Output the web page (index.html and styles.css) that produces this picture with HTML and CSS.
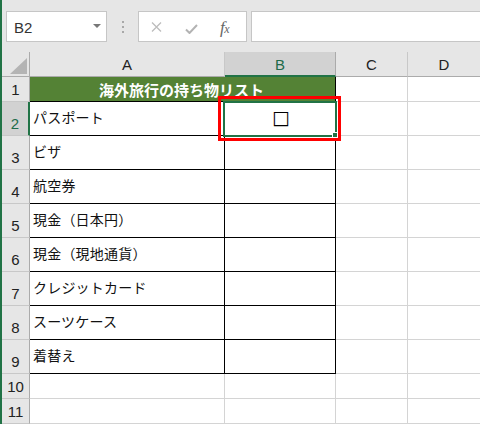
FILE: index.html
```html
<!DOCTYPE html>
<html lang="ja">
<head>
<meta charset="utf-8">
<link rel="stylesheet" href="styles.css">
</head>
<body>
<div class="app">
  <div class="fbar">
    <div class="namebox"><span class="nb-text">B2</span><span class="nb-arrow"></span></div>
    <div class="dots"><i></i><i></i><i></i></div>
    <div class="fbtns">
      <svg class="ic-x" width="11" height="10" viewBox="0 0 11 10"><path d="M1 0.5 L10 9.5 M10 0.5 L1 9.5" stroke="#bdbdbd" stroke-width="1.3" fill="none"/></svg>
      <svg class="ic-ok" width="13" height="10" viewBox="0 0 13 10"><path d="M1 5.5 L4.5 9 L12 1" stroke="#b3b3b3" stroke-width="2" fill="none"/></svg>
      <span class="fx">f<span class="fx-x">x</span></span>
    </div>
    <div class="formula"></div>
  </div>
  <div class="sheet">
    <div class="grid">
      <div class="corner"><span class="tri"></span></div>
      <div class="ch">A</div>
      <div class="ch ch-sel">B</div>
      <div class="ch">C</div>
      <div class="ch">D</div>

      <div class="rh">1</div>
      <div class="title">海外旅行の持ち物リスト</div>
      <div class="c"></div>
      <div class="c"></div>

      <div class="rh rh-sel">2</div>
      <div class="c b txt">パスポート</div>
      <div class="c b chk">□</div>
      <div class="c"></div>
      <div class="c"></div>

      <div class="rh">3</div>
      <div class="c b txt">ビザ</div>
      <div class="c b"></div>
      <div class="c"></div>
      <div class="c"></div>

      <div class="rh">4</div>
      <div class="c b txt">航空券</div>
      <div class="c b"></div>
      <div class="c"></div>
      <div class="c"></div>

      <div class="rh">5</div>
      <div class="c b txt">現金（日本円）</div>
      <div class="c b"></div>
      <div class="c"></div>
      <div class="c"></div>

      <div class="rh">6</div>
      <div class="c b txt">現金（現地通貨）</div>
      <div class="c b"></div>
      <div class="c"></div>
      <div class="c"></div>

      <div class="rh">7</div>
      <div class="c b txt">クレジットカード</div>
      <div class="c b"></div>
      <div class="c"></div>
      <div class="c"></div>

      <div class="rh">8</div>
      <div class="c b txt">スーツケース</div>
      <div class="c b"></div>
      <div class="c"></div>
      <div class="c"></div>

      <div class="rh">9</div>
      <div class="c b txt">着替え</div>
      <div class="c b"></div>
      <div class="c"></div>
      <div class="c"></div>

      <div class="rh">10</div>
      <div class="c"></div>
      <div class="c"></div>
      <div class="c"></div>
      <div class="c"></div>

      <div class="rh">11</div>
      <div class="c"></div>
      <div class="c"></div>
      <div class="c"></div>
      <div class="c"></div>
    </div>
    <div class="sel"><span class="handle"></span></div>
    <div class="annot"></div>
  </div>
</div>
</body>
</html>
```

FILE: styles.css
```css
* { box-sizing: border-box; }
html, body { margin: 0; padding: 0; }
body {
  width: 480px;
  height: 424px;
  overflow: hidden;
  background: #ffffff;
  font-family: "Liberation Sans", Arial, sans-serif;
}
.app {
  width: 480px;
  height: 424px;
  border-left: 2px solid #217346;
  background: #e6e6e6;
  overflow: hidden;
}
.fbar {
  height: 52px;
  display: flex;
  align-items: flex-start;
  padding-top: 11px;
  padding-left: 4px;
  background: #e6e6e6;
}
.namebox {
  width: 101px;
  height: 31px;
  background: #fff;
  border: 1px solid #c6c6c6;
  display: flex;
  align-items: center;
  justify-content: space-between;
  padding: 0 5px 0 7px;
}
.nb-text {
  font-size: 15px;
  color: #333;
  line-height: 1;
  padding-top: 1px;
}
.nb-arrow {
  width: 0;
  height: 0;
  border-left: 4px solid transparent;
  border-right: 4px solid transparent;
  border-top: 4px solid #777;
  margin-top: -1px;
}
.dots {
  width: 31px;
  height: 31px;
  display: flex;
  flex-direction: column;
  align-items: center;
  justify-content: center;
  gap: 3px;
}
.dots i {
  display: block;
  width: 2px;
  height: 2px;
  background: #a8a8a8;
}
.fbtns {
  width: 109px;
  height: 31px;
  background: #fff;
  border: 1px solid #c6c6c6;
  display: flex;
  align-items: center;
  padding-left: 12px;
}
.ic-x { margin-top: 1px; }
.ic-ok { margin-left: 23px; margin-top: 4px; }
.fx {
  margin-left: 22px;
  font-family: "Liberation Serif", "Times New Roman", serif;
  font-style: italic;
  font-size: 17px;
  color: #666;
  line-height: 1;
  letter-spacing: -0.5px;
  margin-top: 1px;
}
.fx-x { font-size: 12px; }
.formula {
  margin-left: 4px;
  flex: 1;
  height: 31px;
  background: #fff;
  border: 1px solid #c6c6c6;
  margin-right: -4px;
}
.sheet {
  position: relative;
}
.grid {
  display: grid;
  grid-template-columns: 28px 195px 111px 72px 73px;
  grid-template-rows: 25px 25px repeat(8, 34px) 25px 25px;
  background: #fff;
}
.corner {
  background: #e6e6e6;
  border-right: 1px solid #ababab;
  border-bottom: 1px solid #ababab;
  display: flex;
  align-items: flex-end;
  justify-content: flex-end;
  padding: 0 2px 2px 0;
}
.tri {
  width: 17px;
  height: 16px;
  background: #b4b4b4;
  clip-path: polygon(100% 0, 100% 100%, 0 100%);
}
.ch {
  background: #e6e6e6;
  border-right: 1px solid #c8c8c8;
  border-bottom: 1px solid #ababab;
  display: flex;
  align-items: center;
  justify-content: center;
  font-size: 15px;
  color: #222;
  line-height: 1;
  padding-top: 1px;
}
.ch-sel {
  background: #d2d2d2;
  color: #1d6b4a;
  border-bottom: 2px solid #217346;
  border-right-color: #ababab;
  padding-top: 2px;
}
.rh {
  background: #e6e6e6;
  border-right: 1px solid #ababab;
  border-bottom: 1px solid #c8c8c8;
  display: flex;
  align-items: flex-end;
  justify-content: center;
  font-size: 15px;
  line-height: 1;
  color: #222;
  padding-bottom: 4px;
}
.rh-sel {
  background: #d2d2d2;
  color: #1d6b4a;
  border-right: 2px solid #217346;
}
.c {
  border-right: 1px solid #d4d4d4;
  border-bottom: 1px solid #d4d4d4;
  font-family: "Noto Sans CJK JP", "Liberation Sans", sans-serif;
  font-size: 14px;
  color: #111;
}
.c.b {
  border-right-color: #000;
  border-bottom-color: #000;
}
.title {
  grid-column: span 2;
  background: #548235;
  border-right: 1px solid #000;
  border-bottom: 1px solid #000;
  display: flex;
  align-items: center;
  justify-content: center;
  font-family: "Noto Sans CJK JP", "Liberation Sans", sans-serif;
  font-weight: bold;
  font-size: 15px;
  color: #fff;
  line-height: 1;
  padding-right: 2px;
}
.txt {
  display: flex;
  align-items: center;
  padding-left: 3px;
  padding-bottom: 3px;
  line-height: 1;
  letter-spacing: 0.2px;
}
.chk {
  display: flex;
  align-items: center;
  justify-content: center;
  line-height: 1;
  font-family: "DejaVu Sans", "Noto Sans CJK JP", sans-serif;
  font-size: 19px;
  color: #000;
  padding-bottom: 3px;
  padding-left: 2px;
}
.sel {
  position: absolute;
  left: 221px;
  top: 49px;
  width: 114px;
  height: 36px;
  border: 2px solid #217346;
}
.handle {
  position: absolute;
  right: -3px;
  bottom: -3px;
  width: 6px;
  height: 6px;
  background: #217346;
  border: 1px solid #fff;
}
.annot {
  position: absolute;
  left: 216px;
  top: 44px;
  width: 123px;
  height: 45px;
  border: 3px solid #ff0000;
}
```
